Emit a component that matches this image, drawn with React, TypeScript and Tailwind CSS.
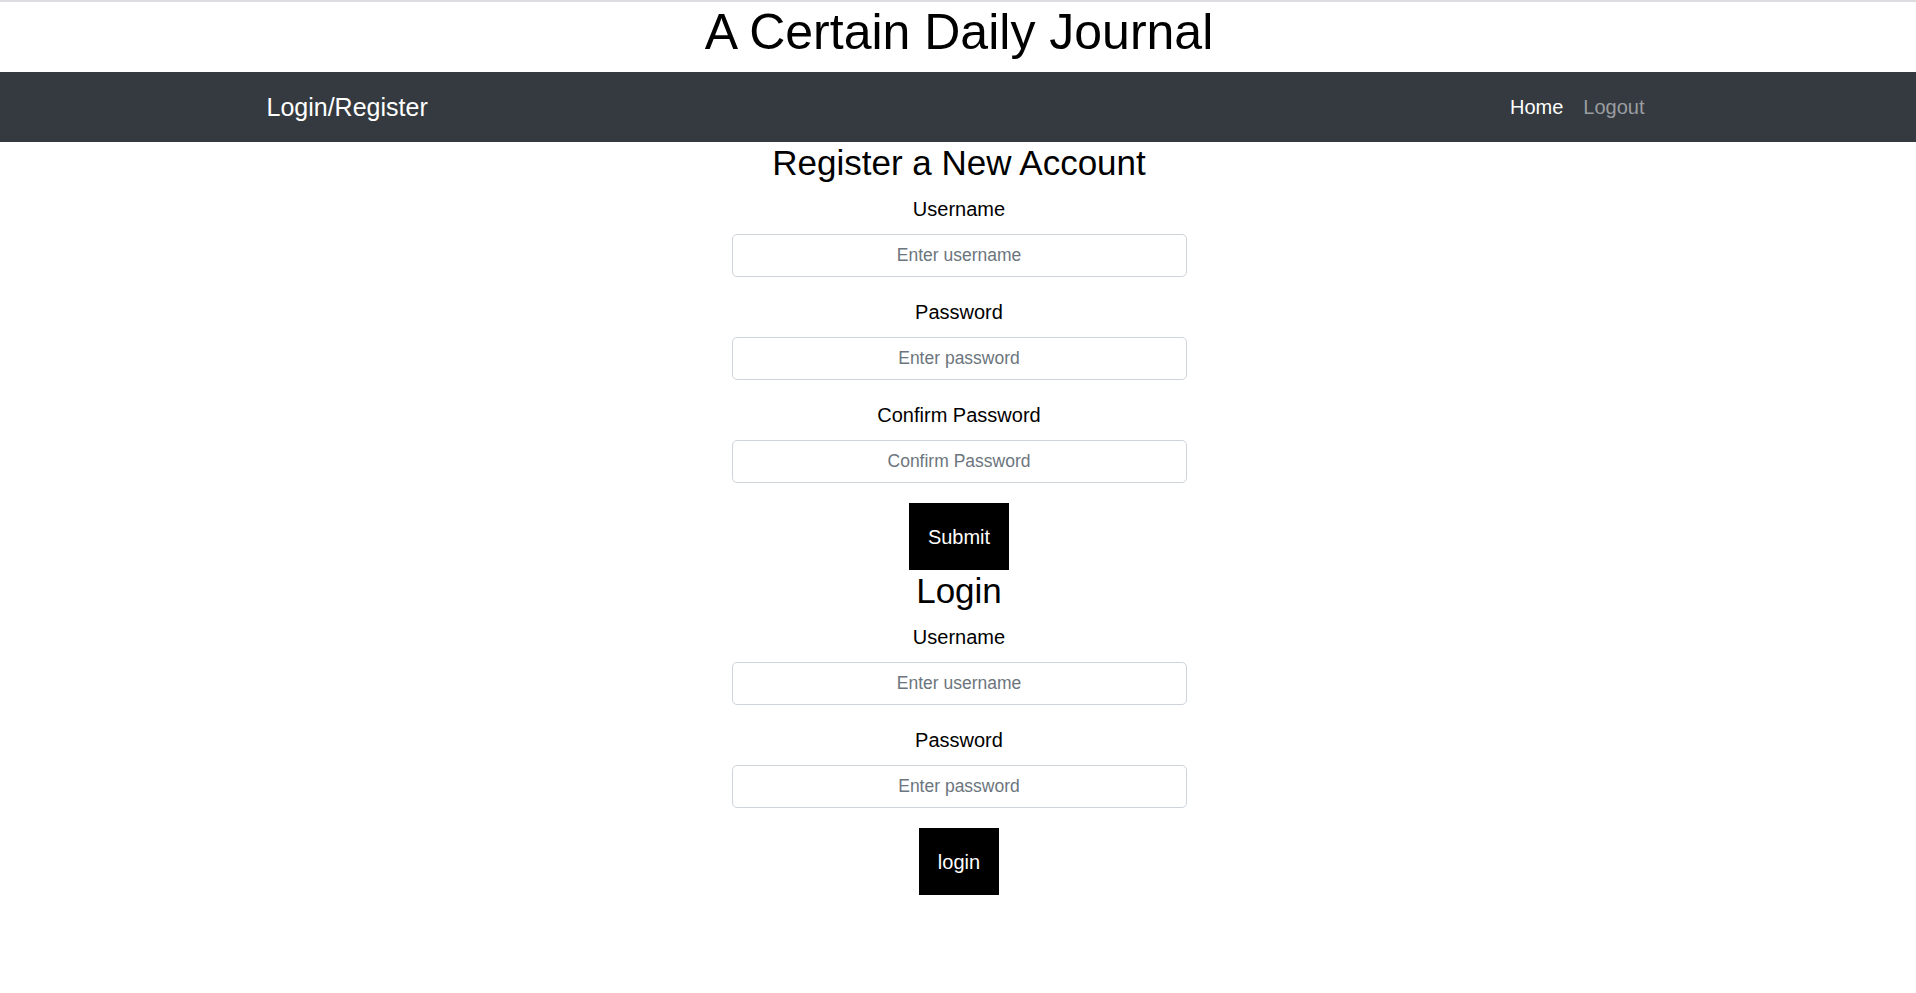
import React from "react";

const Field = ({ label, placeholder }: { label: string; placeholder: string }) => (
  <div className="mb-[20px] flex flex-col items-center">
    <label className="mb-[10px] text-[20px] leading-[30px] text-black">{label}</label>
    <input
      type="text"
      placeholder={placeholder}
      className="h-[43px] w-[455px] rounded-[5px] border border-[#ced4da] bg-white px-[10px] text-center text-[17.5px] text-[#495057] outline-none placeholder:text-[#6c757d]"
    />
  </div>
);

const App = () => {
  return (
    <div className="min-h-screen border-t-2 border-[#dcdde0] bg-white pl-[2px] font-['Liberation_Sans',Arial,sans-serif] text-black">
      <h1 className="mb-[10px] text-center text-[50px] leading-[60px]">A Certain Daily Journal</h1>

      <nav className="-ml-[2px] h-[70px] bg-[#343a40]">
        <div className="mx-auto flex h-full w-[1425px] items-center justify-between pl-[21px] pr-[16px]">
          <span className="text-[25px] leading-[37px] text-white">Login/Register</span>
          <div className="flex text-[20px] leading-[30px]">
            <span className="px-[10px] text-white">Home</span>
            <span className="px-[10px] text-[#9a9da0]">Logout</span>
          </div>
        </div>
      </nav>

      <div className="flex flex-col items-center">
        <h3 className="mb-[10px] text-[35px] leading-[42px]">Register a New Account</h3>
        <Field label="Username" placeholder="Enter username" />
        <Field label="Password" placeholder="Enter password" />
        <Field label="Confirm Password" placeholder="Confirm Password" />
        <button className="bg-black px-[18.5px] py-[18.5px] text-[20px] leading-[30px] text-white">Submit</button>

        <h3 className="mb-[10px] text-[35px] leading-[42px]">Login</h3>
        <Field label="Username" placeholder="Enter username" />
        <Field label="Password" placeholder="Enter password" />
        <button className="bg-black px-[18.5px] py-[18.5px] text-[20px] leading-[30px] text-white">login</button>
      </div>
    </div>
  );
};

export default App;
